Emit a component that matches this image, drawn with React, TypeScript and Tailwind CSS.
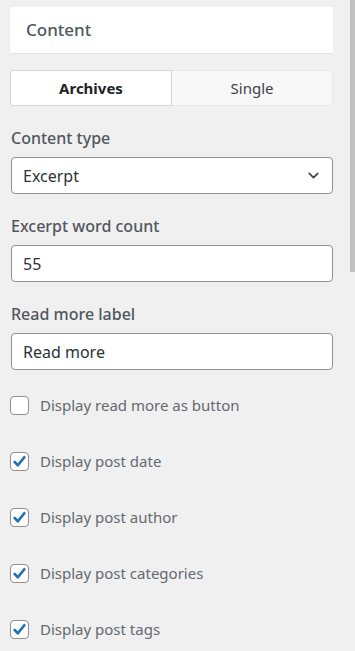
import { ChevronDown } from 'lucide-react';

const font = { fontFamily: '"Noto Sans", "Open Sans", sans-serif' };

const checkboxes = [
  { label: 'Display read more as button', checked: false },
  { label: 'Display post date', checked: true },
  { label: 'Display post author', checked: true },
  { label: 'Display post categories', checked: true },
  { label: 'Display post tags', checked: true },
];

const Check = ({ checked }: { checked: boolean }) => (
  <span className="flex h-[19px] w-[19px] shrink-0 items-center justify-center rounded-[4px] border border-[#8c8f94] bg-white">
    {checked && (
      <svg width="15" height="15" viewBox="0 0 14 14" fill="none">
        <path d="M2.5 7.5 L5.5 10.5 L11.5 3" stroke="#2271b1" strokeWidth="2.5" strokeLinecap="round" strokeLinejoin="round" />
      </svg>
    )}
  </span>
);

export default function App() {
  return (
    <div className="flex h-[651px] w-[355px] overflow-hidden bg-[#f0f0f0]" style={font}>
      <div className="flex-1 pl-[10px] pr-[17px] pt-[7px]">
        <div className="flex h-[47px] items-center border-b border-[#e2e2e2] bg-white pl-[16px]">
          <span className="text-[17px] font-medium text-[#50575e]">Content</span>
        </div>

        <div className="mt-[16px] flex h-[36px]">
          <div className="flex flex-1 items-center justify-center rounded-l-[3px] border border-[#d4d4d4] bg-white text-[15px] font-bold text-[#1d2327]">
            Archives
          </div>
          <div className="flex flex-1 items-center justify-center rounded-r-[3px] border border-l-0 border-[#e6e6e6] bg-[#f8f8f8] text-[15px] text-[#3c434a]">
            Single
          </div>
        </div>

        <div className="pl-px">
          <div className="mt-[21px] text-[16px] leading-[22px] font-medium text-[#50575e]">Content type</div>
          <div className="mt-[8px] flex h-[37px] items-center justify-between rounded-[4px] border border-[#8c8f94] bg-white pl-[11px] pr-[10px] text-[16px] text-[#2c3338]">
            <span>Excerpt</span>
            <ChevronDown size={17} strokeWidth={2.4} color="#3c434a" />
          </div>

          <div className="mt-[21px] text-[16px] leading-[22px] font-medium text-[#50575e]">Excerpt word count</div>
          <div className="mt-[8px] flex h-[37px] items-center rounded-[4px] border border-[#8c8f94] bg-white pl-[11px] text-[16px] text-[#2c3338]">
            55
          </div>

          <div className="mt-[21px] text-[16px] leading-[22px] font-medium text-[#50575e]">Read more label</div>
          <div className="mt-[8px] flex h-[37px] items-center rounded-[4px] border border-[#8c8f94] bg-white pl-[11px] text-[16px] text-[#2c3338]">
            Read more
          </div>
        </div>

        <div className="mt-[26px] flex flex-col gap-[37px]">
          {checkboxes.map(({ label, checked }) => (
            <div key={label} className="flex h-[19px] items-center gap-[11px]">
              <Check checked={checked} />
              <span className="text-[15px] text-[#646970]">{label}</span>
            </div>
          ))}
        </div>
      </div>
      <div className="h-[272px] w-[5px] bg-[#c1c1c1]" />
    </div>
  );
}
